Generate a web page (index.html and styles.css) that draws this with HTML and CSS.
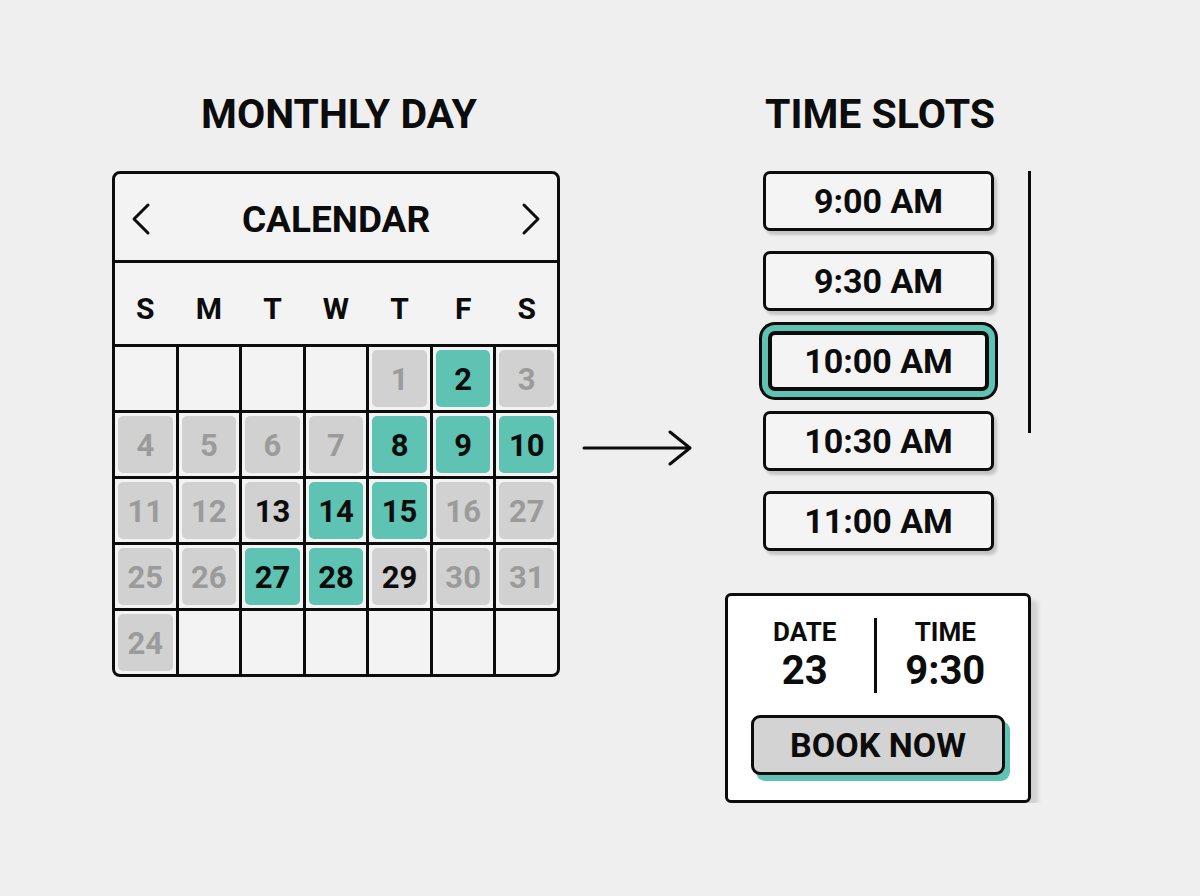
FILE: index.html
```html
<!DOCTYPE html>
<html lang="en">
<head>
    <meta charset="UTF-8">
    <meta name="viewport" content="width=device-width, initial-scale=1.0">
    <title>Booking</title>
    <link rel="stylesheet" href="styles.css">
</head>
<body>
    <div class="page">
        <section class="left">
            <h2>MONTHLY DAY</h2>
            <div class="calendar">
                <div class="cal-head">
                    <svg class="chev" width="20" height="34" viewBox="0 0 20 34"><path d="M17 3 L3 17 L17 31"/></svg>
                    <span class="cal-title">CALENDAR</span>
                    <svg class="chev" width="20" height="34" viewBox="0 0 20 34"><path d="M3 3 L17 17 L3 31"/></svg>
                </div>
                <div class="weekdays">
                    <span>S</span><span>M</span><span>T</span><span>W</span><span>T</span><span>F</span><span>S</span>
                </div>
                <div class="days">
                    <div class="cell"></div>
                    <div class="cell"></div>
                    <div class="cell"></div>
                    <div class="cell"></div>
                    <div class="cell"><span class="day off">1</span></div>
                    <div class="cell"><span class="day pick">2</span></div>
                    <div class="cell"><span class="day off">3</span></div>

                    <div class="cell"><span class="day off">4</span></div>
                    <div class="cell"><span class="day off">5</span></div>
                    <div class="cell"><span class="day off">6</span></div>
                    <div class="cell"><span class="day off">7</span></div>
                    <div class="cell"><span class="day pick">8</span></div>
                    <div class="cell"><span class="day pick">9</span></div>
                    <div class="cell"><span class="day pick">10</span></div>

                    <div class="cell"><span class="day off">11</span></div>
                    <div class="cell"><span class="day off">12</span></div>
                    <div class="cell"><span class="day open">13</span></div>
                    <div class="cell"><span class="day pick">14</span></div>
                    <div class="cell"><span class="day pick">15</span></div>
                    <div class="cell"><span class="day off">16</span></div>
                    <div class="cell"><span class="day off">27</span></div>

                    <div class="cell"><span class="day off">25</span></div>
                    <div class="cell"><span class="day off">26</span></div>
                    <div class="cell"><span class="day pick">27</span></div>
                    <div class="cell"><span class="day pick">28</span></div>
                    <div class="cell"><span class="day open">29</span></div>
                    <div class="cell"><span class="day off">30</span></div>
                    <div class="cell"><span class="day off">31</span></div>

                    <div class="cell"><span class="day off">24</span></div>
                    <div class="cell"></div>
                    <div class="cell"></div>
                    <div class="cell"></div>
                    <div class="cell"></div>
                    <div class="cell"></div>
                    <div class="cell"></div>
                </div>
            </div>
        </section>

        <div class="link">
            <svg width="112" height="36" viewBox="0 0 112 36"><path d="M2 18 H108 M88 2 L108 18 L88 34"/></svg>
        </div>

        <section class="right">
            <h2>TIME SLOTS</h2>
            <div class="slots-row">
                <div class="slots">
                    <div class="slot">9:00 AM</div>
                    <div class="slot">9:30 AM</div>
                    <div class="slot selected">10:00 AM</div>
                    <div class="slot">10:30 AM</div>
                    <div class="slot">11:00 AM</div>
                </div>
                <div class="scroll-line"></div>
            </div>

            <div class="summary">
                <div class="info">
                    <div class="info-col">
                        <span class="label">DATE</span>
                        <span class="value">23</span>
                    </div>
                    <div class="divider"></div>
                    <div class="info-col">
                        <span class="label">TIME</span>
                        <span class="value">9:30</span>
                    </div>
                </div>
                <button class="book">BOOK NOW</button>
            </div>
        </section>
    </div>
</body>
</html>
```

FILE: styles.css
```css
body {
    margin: 0;
    background-color: #efefef;
    font-family: Roboto, "Liberation Sans", sans-serif;
    font-weight: 700;
    color: #0c0c0c;
}

.page {
    display: grid;
    grid-template-columns: 448px 165px 306px;
    padding: 89px 0 0 112px;
}

h2 {
    margin: 0 0 32px;
    font-size: 41px;
    line-height: 50px;
    text-align: center;
}

.left h2 {
    padding-left: 6px;
}

.right h2 {
    padding-left: 4px;
}

/* calendar */

.calendar {
    border: 3px solid #0c0c0c;
    border-radius: 8px;
    background-color: #f3f3f3;
    overflow: hidden;
}

.cal-head {
    height: 89px;
    display: flex;
    align-items: center;
    justify-content: space-between;
    padding: 4px 16px 0;
    box-sizing: border-box;
    border-bottom: 3px solid #0c0c0c;
}

.cal-title {
    font-size: 37px;
}

.chev path {
    fill: none;
    stroke: #0c0c0c;
    stroke-width: 3;
    stroke-linecap: round;
    stroke-linejoin: round;
}

.weekdays {
    display: grid;
    grid-template-columns: repeat(7, 1fr);
    column-gap: 3px;
    height: 84px;
    align-items: center;
    border-bottom: 3px solid #0c0c0c;
    font-size: 30px;
    text-align: center;
    padding-top: 10px;
    box-sizing: border-box;
}

.days {
    display: grid;
    grid-template-columns: repeat(7, 1fr);
    grid-auto-rows: 63px;
    gap: 3px;
    background-color: #0c0c0c;
}

.cell {
    background-color: #f3f3f3;
    padding: 3px;
    display: flex;
}

.day {
    flex: 1;
    display: flex;
    align-items: center;
    justify-content: center;
    border-radius: 5px;
    font-size: 31px;
    padding-top: 2px;
}

.day.off {
    background-color: #d1d1d1;
    color: #9b9b9b;
}

.day.open {
    background-color: #d1d1d1;
    color: #0c0c0c;
}

.day.pick {
    background-color: #5ec3b3;
    color: #0c0c0c;
}

/* arrow between the panels */

.link {
    padding: 341px 0 0 22px;
}

.link path {
    fill: none;
    stroke: #0c0c0c;
    stroke-width: 3;
    stroke-linecap: round;
    stroke-linejoin: round;
}

/* time slots */

.slots-row {
    display: flex;
    padding-left: 38px;
}

.slots {
    width: 231px;
    display: flex;
    flex-direction: column;
    gap: 20px;
}

.slot {
    height: 60px;
    box-sizing: border-box;
    border: 3px solid #0c0c0c;
    border-radius: 7px;
    background-color: #f4f4f4;
    box-shadow: 3px 4px 3px rgba(0, 0, 0, 0.18);
    display: flex;
    align-items: center;
    justify-content: center;
    font-size: 34px;
}

.slot.selected {
    margin: 0 5px;
    border-width: 4px;
    box-shadow: 0 0 0 6px #5ec3b3, 0 0 0 9px #0c0c0c;
}

.scroll-line {
    width: 3px;
    height: 262px;
    margin-left: 34px;
    background-color: #0c0c0c;
}

/* booking summary */

.summary {
    margin-top: 42px;
    width: 306px;
    height: 210px;
    box-sizing: border-box;
    border: 3px solid #0c0c0c;
    border-radius: 6px;
    background-color: #fff;
    box-shadow: 7px 7px 4px rgba(0, 0, 0, 0.12);
    padding: 22px 0 0;
}

.info {
    display: grid;
    grid-template-columns: 1fr 3px 1fr;
    padding: 0 14px 0 8px;
}

.info-col {
    display: flex;
    flex-direction: column;
    align-items: center;
}

.label {
    font-size: 26px;
    line-height: 28px;
}

.value {
    margin-top: 3px;
    font-size: 40px;
    line-height: 44px;
}

.divider {
    background-color: #0c0c0c;
}

.book {
    margin: 22px 0 0 23px;
    width: 254px;
    height: 60px;
    border: 3px solid #0c0c0c;
    border-radius: 9px;
    background-color: #d3d3d3;
    box-shadow: 5px 6px 0 #5ec3b3;
    font-family: Roboto, "Liberation Sans", sans-serif;
    font-weight: 700;
    font-size: 34px;
    color: #0c0c0c;
    cursor: pointer;
}
```
